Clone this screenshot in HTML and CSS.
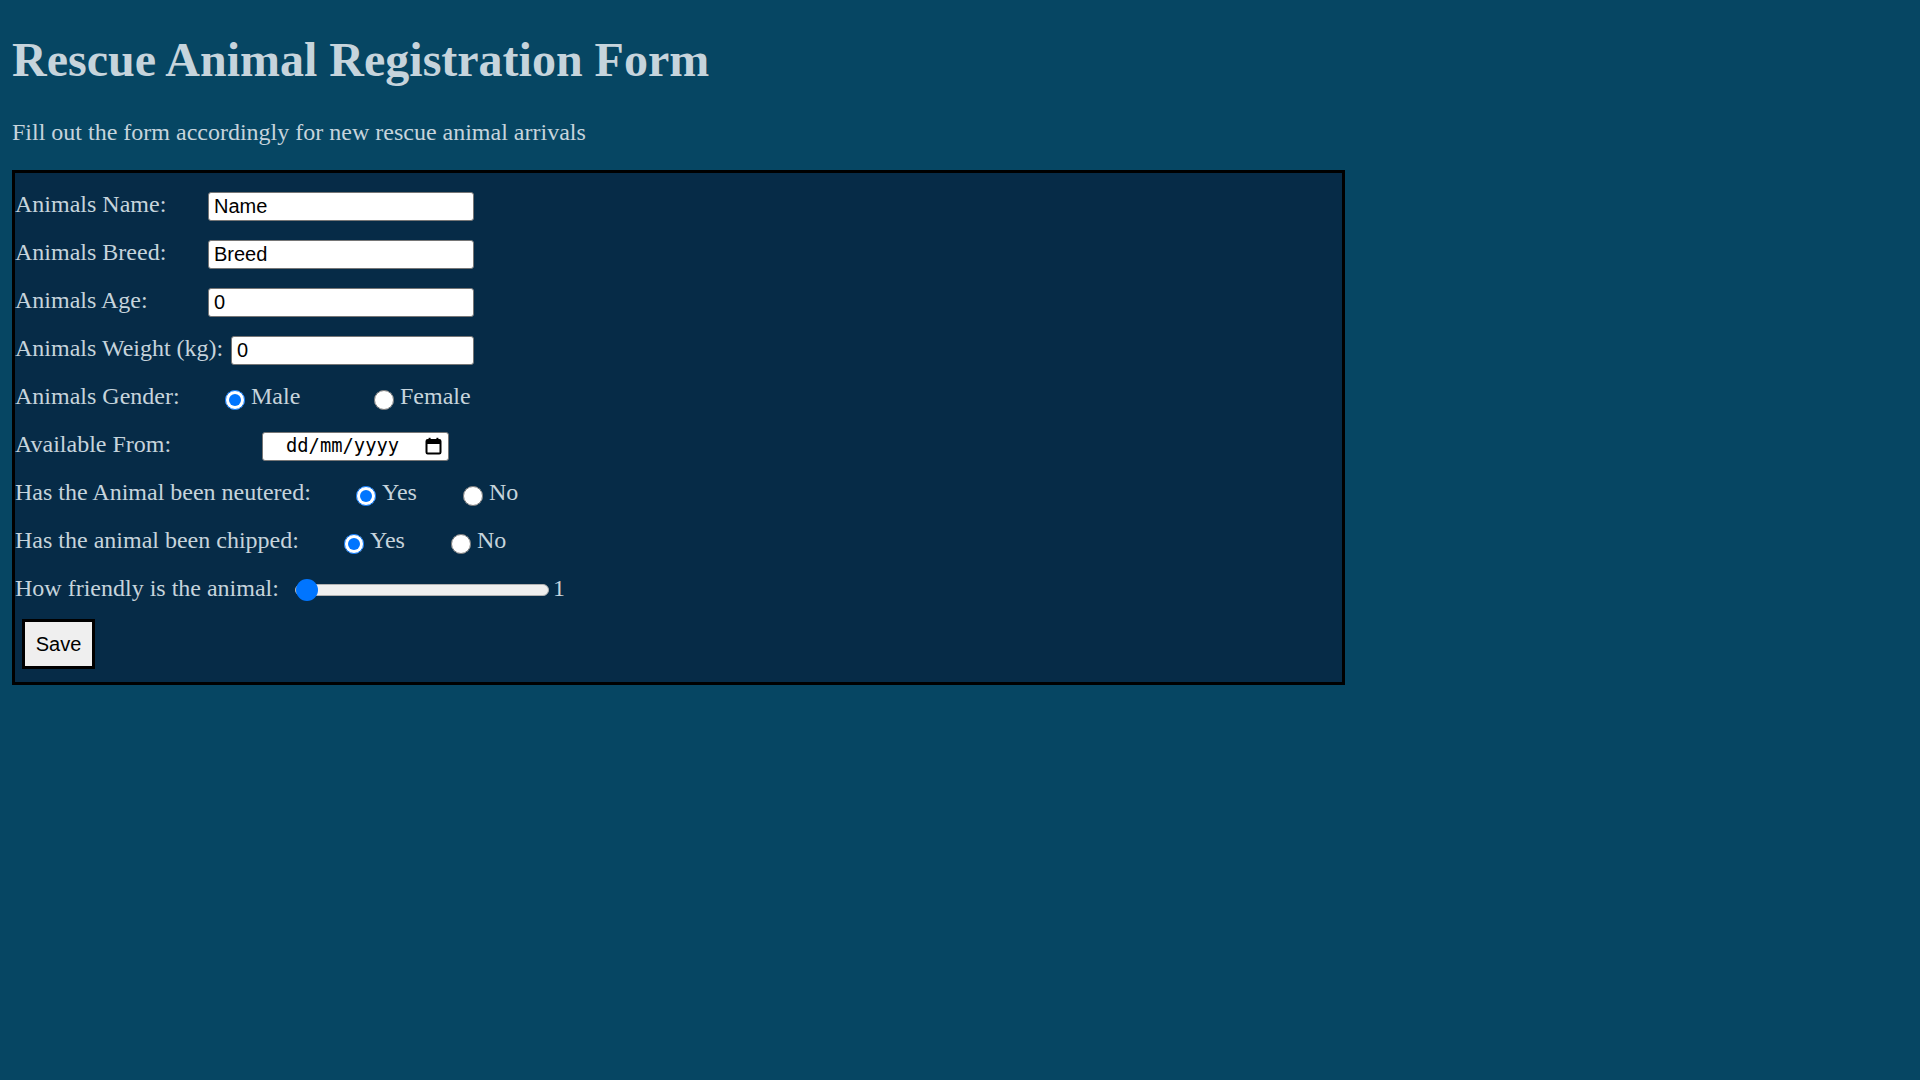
FILE: index.html
```html
<!DOCTYPE html>
<html lang="en">
<head>
<meta charset="utf-8">
<title>Rescue Animal Registration Form</title>
<link rel="stylesheet" href="styles.css">
</head>
<body>
<main class="page">
  <h1 class="title">Rescue Animal Registration Form</h1>
  <p class="subtitle">Fill out the form accordingly for new rescue animal arrivals</p>
  <form class="reg-form">
    <div class="row row-input">
      <label class="field-label w-std" for="animal-name">Animals Name:</label>
      <input class="text-input" id="animal-name" type="text" value="Name">
    </div>
    <div class="row row-input">
      <label class="field-label w-std" for="animal-breed">Animals Breed:</label>
      <input class="text-input" id="animal-breed" type="text" value="Breed">
    </div>
    <div class="row row-input">
      <label class="field-label w-std" for="animal-age">Animals Age:</label>
      <input class="text-input" id="animal-age" type="text" value="0">
    </div>
    <div class="row row-input">
      <label class="field-label w-weight" for="animal-weight">Animals Weight (kg):</label>
      <input class="text-input" id="animal-weight" type="text" value="0">
    </div>
    <div class="row">
      <span class="field-label w-gender">Animals Gender:</span>
      <label class="option opt-gender"><input class="radio" type="radio" name="gender" checked>Male</label>
      <label class="option"><input class="radio" type="radio" name="gender">Female</label>
    </div>
    <div class="row">
      <span class="field-label w-date">Available From:</span>
      <div class="date-input">
        <span class="date-text">dd/mm/yyyy</span>
        <svg class="cal-icon" width="17" height="18" viewBox="0 0 17 18" aria-hidden="true">
          <rect x="1.5" y="3" width="14" height="13.5" rx="1.2" fill="none" stroke="#000" stroke-width="2"/>
          <rect x="1.5" y="3" width="14" height="4" fill="#000"/>
          <rect x="3.6" y="0.8" width="2" height="3" fill="#000"/>
          <rect x="11.4" y="0.8" width="2" height="3" fill="#000"/>
        </svg>
      </div>
    </div>
    <div class="row">
      <span class="field-label w-neutered">Has the Animal been neutered:</span>
      <label class="option opt-yesno"><input class="radio" type="radio" name="neutered" checked>Yes</label>
      <label class="option"><input class="radio" type="radio" name="neutered">No</label>
    </div>
    <div class="row">
      <span class="field-label w-chipped">Has the animal been chipped:</span>
      <label class="option opt-yesno"><input class="radio" type="radio" name="chipped" checked>Yes</label>
      <label class="option"><input class="radio" type="radio" name="chipped">No</label>
    </div>
    <div class="row">
      <label class="field-label w-friendly" for="friendly">How friendly is the animal:</label>
      <input class="slider" id="friendly" type="range" min="1" max="10" value="1">
      <span class="range-value">1</span>
    </div>
    <button class="save-btn" type="button">Save</button>
  </form>
</main>
</body>
</html>
```
FILE: styles.css
```css
html, body {
  margin: 0;
  padding: 0;
}

body {
  background: #064663;
  color: #c6d4dc;
  font-family: "Liberation Serif", "Times New Roman", serif;
  font-size: 24px;
}

.page {
  padding: 0 12px;
}

.title {
  margin: 32px 0 32px;
  font-size: 48px;
  font-weight: bold;
  line-height: normal;
}

.subtitle {
  margin: 0 0 24px;
  font-size: 24px;
  line-height: normal;
}

.reg-form {
  width: 70%;
  border: 3px solid #000;
  background: #062b47;
  padding: 18px 0 13px;
  display: flex;
  flex-direction: column;
  gap: 18px;
}

.row {
  display: flex;
  align-items: center;
  height: 30px;
}

.row-input {
  width: 459px;
}

.field-label {
  flex: none;
  white-space: nowrap;
  padding-bottom: 3px;
}

.w-std { width: 193px; }
.w-weight { width: 216px; }
.w-gender { width: 210px; }
.w-date { width: 247px; }
.w-neutered { width: 341px; }
.w-chipped { width: 329px; }
.w-friendly { width: 280px; }

.text-input {
  flex: 1;
  min-width: 0;
  height: 29px;
  box-sizing: border-box;
  margin: 0;
  padding: 0 5px;
  border: 1.5px solid #767676;
  border-radius: 3px;
  background: #fff;
  color: #000;
  font-family: "Liberation Sans", Arial, sans-serif;
  font-size: 20px;
}

.option {
  display: flex;
  align-items: center;
  gap: 6px;
  white-space: nowrap;
  padding-bottom: 3px;
}

.opt-gender { width: 149px; }
.opt-yesno { width: 107px; }

.radio {
  width: 20px;
  height: 20px;
  margin: 7px 0 0;
  flex: none;
}

.date-input {
  width: 187px;
  height: 29px;
  box-sizing: border-box;
  border: 1.5px solid #767676;
  border-radius: 3px;
  background: #fff;
  color: #000;
  display: flex;
  align-items: center;
  justify-content: space-between;
  padding: 0 6px 0 23px;
}

.date-text {
  font-family: "DejaVu Sans Mono", "Liberation Mono", monospace;
  font-size: 18.8px;
  line-height: 1;
}

.cal-icon {
  display: block;
}

.slider {
  -webkit-appearance: none;
  appearance: none;
  width: 254px;
  height: 22px;
  margin: 0;
  padding: 0;
  background: transparent;
}

.slider::-webkit-slider-runnable-track {
  box-sizing: border-box;
  height: 12px;
  border-radius: 6px;
  background: #efefef;
  border: 1.5px solid #b2b2b2;
}

.slider::-webkit-slider-thumb {
  -webkit-appearance: none;
  appearance: none;
  width: 22px;
  height: 22px;
  border: none;
  border-radius: 50%;
  background: #0075ff;
  margin-top: -6.5px;
}

.range-value {
  margin-left: 4px;
  padding-bottom: 3px;
}

.save-btn {
  align-self: flex-start;
  margin: -4px 0 0 7px;
  width: 73px;
  height: 50px;
  padding: 0;
  border: 3px solid #000;
  background: #efefef;
  color: #000;
  font-family: "Liberation Sans", Arial, sans-serif;
  font-size: 20px;
}
```
